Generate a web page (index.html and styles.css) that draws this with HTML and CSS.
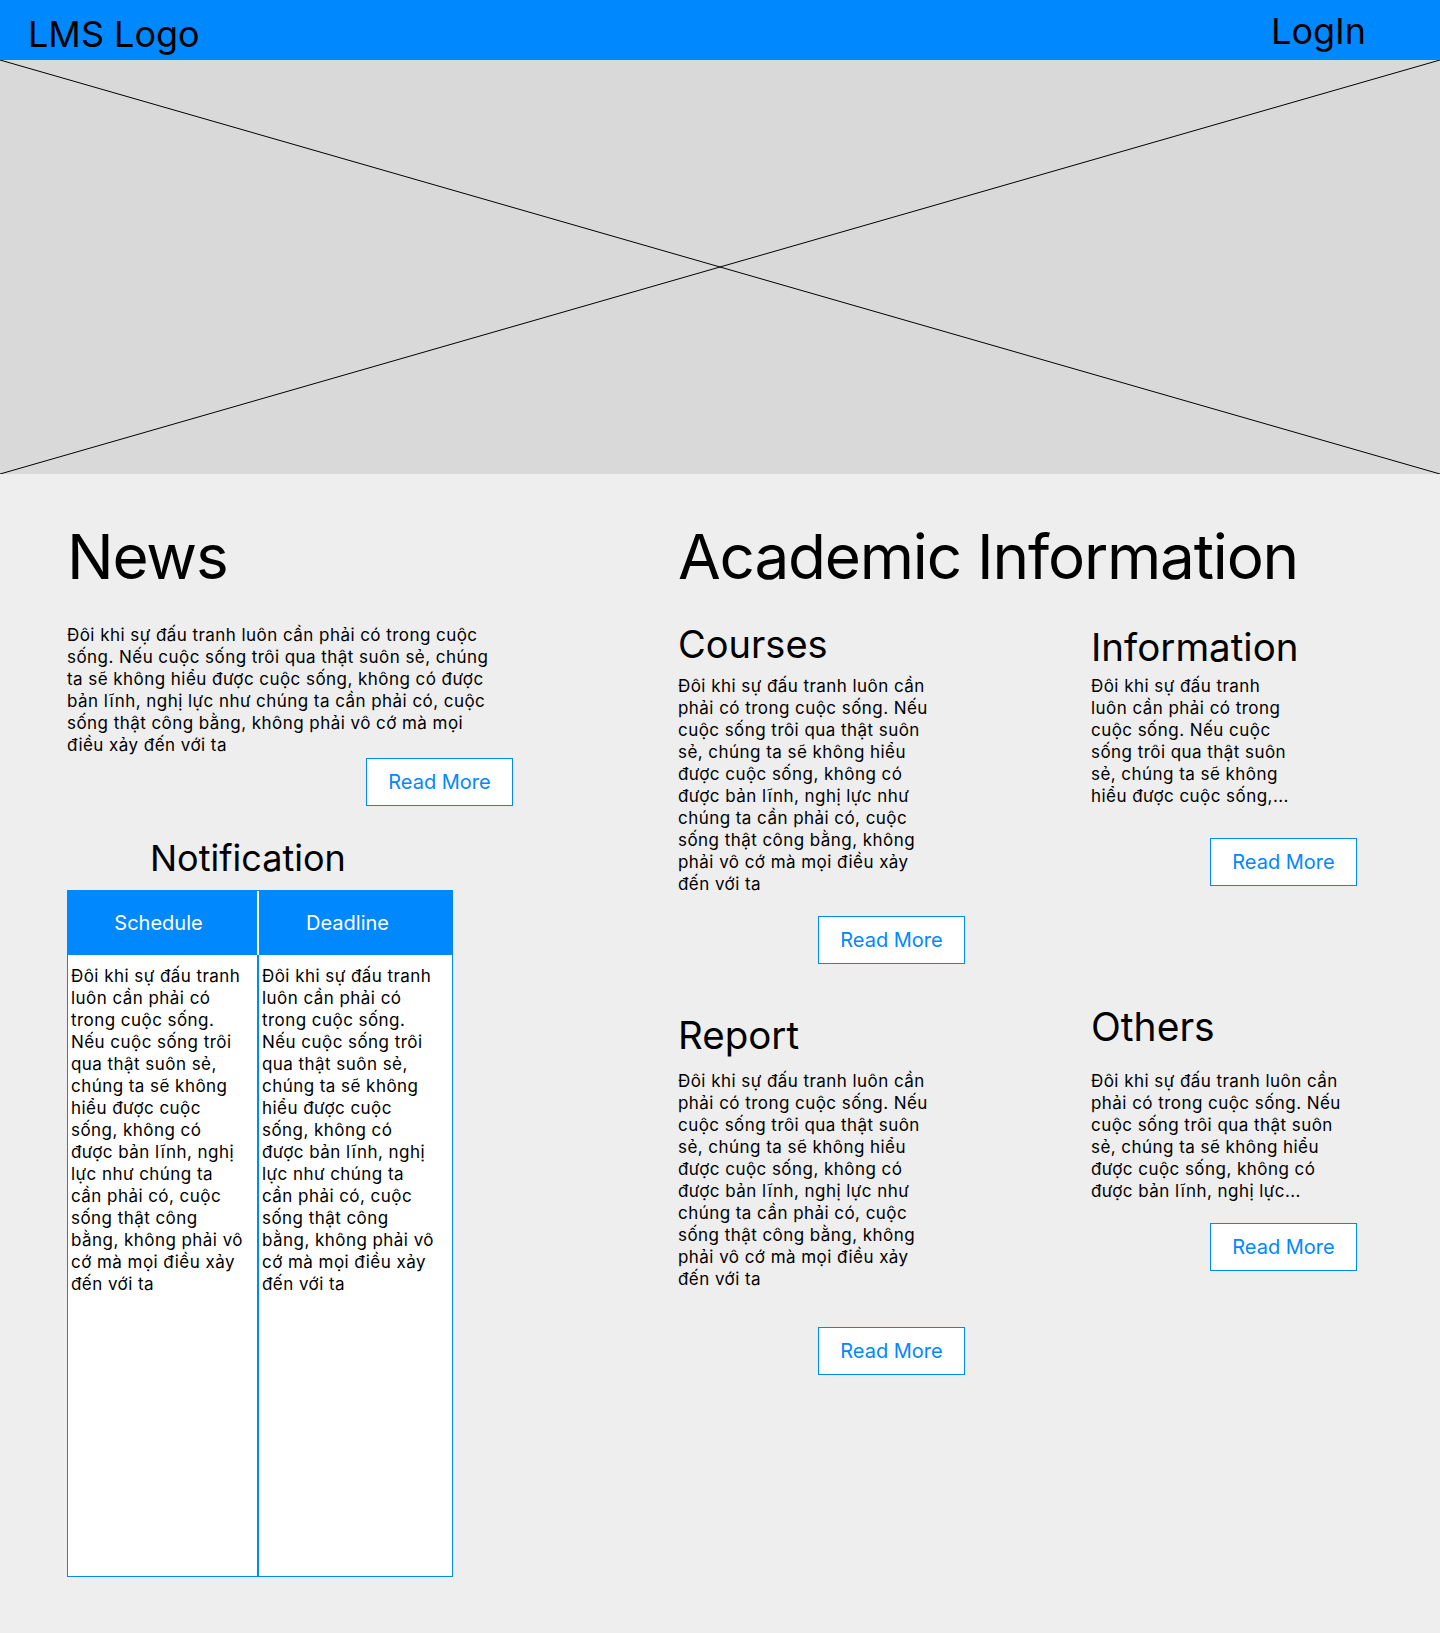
FILE: index.html
```html
<!DOCTYPE html>
<html lang="vi">
<head>
  <meta charset="UTF-8">
  <meta name="viewport" content="width=device-width, initial-scale=1.0">
  <title>LMS</title>
  <link rel="stylesheet" href="styles.css">
</head>
<body>
  <header class="topbar">
    <div class="logo">LMS Logo</div>
    <div class="login">LogIn</div>
  </header>

  <div class="hero">
    <svg class="hero-cross" viewBox="0 0 1440 414" preserveAspectRatio="none">
      <line x1="0" y1="0" x2="1440" y2="414" />
      <line x1="0" y1="414" x2="1440" y2="0" />
    </svg>
  </div>

  <main class="content">
    <section class="left-col">
      <div class="news">
        <h1 class="big-title">News</h1>
        <p class="text news-text">Đôi khi sự đấu tranh luôn cần phải có trong cuộc sống. Nếu cuộc sống trôi qua thật suôn sẻ, chúng ta sẽ không hiểu được cuộc sống, không có được bản lĩnh, nghị lực như chúng ta cần phải có, cuộc sống thật công bằng, không phải vô cớ mà mọi điều xảy đến với ta</p>
        <button class="read-more">Read More</button>
      </div>

      <h2 class="sub-title notify-title">Notification</h2>
      <div class="notice">
        <div class="notice-head">Schedule</div>
        <div class="notice-head second">Deadline</div>
        <div class="notice-body first">Đôi khi sự đấu tranh luôn cần phải có trong cuộc sống. Nếu cuộc sống trôi qua thật suôn sẻ, chúng ta sẽ không hiểu được cuộc sống, không có được bản lĩnh, nghị lực như chúng ta cần phải có, cuộc sống thật công bằng, không phải vô cớ mà mọi điều xảy đến với ta</div>
        <div class="notice-body second">Đôi khi sự đấu tranh luôn cần phải có trong cuộc sống. Nếu cuộc sống trôi qua thật suôn sẻ, chúng ta sẽ không hiểu được cuộc sống, không có được bản lĩnh, nghị lực như chúng ta cần phải có, cuộc sống thật công bằng, không phải vô cớ mà mọi điều xảy đến với ta</div>
      </div>
    </section>

    <section class="right-col">
      <h1 class="big-title">Academic Information</h1>
      <div class="cards">
        <div class="card courses">
          <h2 class="sub-title">Courses</h2>
          <p class="text">Đôi khi sự đấu tranh luôn cần phải có trong cuộc sống. Nếu cuộc sống trôi qua thật suôn sẻ, chúng ta sẽ không hiểu được cuộc sống, không có được bản lĩnh, nghị lực như chúng ta cần phải có, cuộc sống thật công bằng, không phải vô cớ mà mọi điều xảy đến với ta</p>
          <button class="read-more">Read More</button>
        </div>
        <div class="card info">
          <h2 class="sub-title">Information</h2>
          <p class="text">Đôi khi sự đấu tranh luôn cần phải có trong cuộc sống. Nếu cuộc sống trôi qua thật suôn sẻ, chúng ta sẽ không hiểu được cuộc sống,...</p>
          <button class="read-more">Read More</button>
        </div>
        <div class="card report">
          <h2 class="sub-title">Report</h2>
          <p class="text">Đôi khi sự đấu tranh luôn cần phải có trong cuộc sống. Nếu cuộc sống trôi qua thật suôn sẻ, chúng ta sẽ không hiểu được cuộc sống, không có được bản lĩnh, nghị lực như chúng ta cần phải có, cuộc sống thật công bằng, không phải vô cớ mà mọi điều xảy đến với ta</p>
          <button class="read-more">Read More</button>
        </div>
        <div class="card others">
          <h2 class="sub-title">Others</h2>
          <p class="text">Đôi khi sự đấu tranh luôn cần phải có trong cuộc sống. Nếu cuộc sống trôi qua thật suôn sẻ, chúng ta sẽ không hiểu được cuộc sống, không có được bản lĩnh, nghị lực...</p>
          <button class="read-more">Read More</button>
        </div>
      </div>
    </section>
  </main>
</body>
</html>
```

FILE: styles.css
```css
:root {
  --blue: #0088ff;
  --hero: #d9d9d9;
  --bg: #eeeeee;
  --text: #000;
}
* {
  box-sizing: border-box;
}
body {
  margin: 0;
  background: var(--bg);
  color: var(--text);
  font-family: Inter, 'Noto Sans', sans-serif;
  min-height: 1633px;
}
h1, h2, p {
  margin: 0;
  font-weight: 400;
}

.topbar {
  height: 60px;
  background: var(--blue);
  display: flex;
  justify-content: space-between;
  align-items: center;
  padding: 0 74px 0 28px;
  font-size: 36px;
}
.logo {
  padding-top: 7px;
}
.login {
  padding-top: 2px;
}

.hero {
  height: 414px;
  background: var(--hero);
}
.hero-cross {
  display: block;
  width: 100%;
  height: 100%;
}
.hero-cross line {
  stroke: #000;
  stroke-width: 1;
}

.content {
  display: grid;
  grid-template-columns: 611px 1fr;
  padding: 46px 0 0 67px;
}

.big-title {
  font-size: 62px;
  line-height: 1.2;
  letter-spacing: -1.2px;
}
.sub-title {
  font-size: 38px;
  line-height: 46px;
}
.text {
  font-size: 17px;
  line-height: 22px;
  letter-spacing: 0.45px;
}

.read-more {
  width: 147px;
  height: 48px;
  background: #fff;
  border: 1px solid var(--blue);
  color: var(--blue);
  font-family: inherit;
  font-size: 20px;
  cursor: pointer;
}

.news {
  width: 446px;
  display: flex;
  flex-direction: column;
}
.news-text {
  width: 425px;
  margin-top: 30px;
}
.news .read-more {
  align-self: flex-end;
  margin-top: 2px;
}

.notify-title {
  margin: 30px 0 0 83px;
  font-size: 36px;
  line-height: 44px;
}
.notice {
  margin-top: 10px;
  width: 386px;
  height: 687px;
  display: grid;
  grid-template-columns: 189px 193px;
  grid-template-rows: 64px 1fr;
  column-gap: 2px;
  border: 1px solid var(--blue);
  background: #fff;
}
.notice-head {
  background: var(--blue);
  color: #fff;
  font-size: 20px;
  display: flex;
  align-items: center;
  justify-content: center;
  padding-right: 8px;
}
.notice-head.second {
  padding-right: 16px;
}
.notice-body {
  font-size: 17px;
  line-height: 22px;
  letter-spacing: 0.45px;
  padding: 10px 10px 0 3px;
}
.notice-body.first {
  border-right: 2px solid var(--blue);
  margin-right: -2px;
}
.notice-body.second {
  padding-right: 14px;
}

.cards {
  display: grid;
  grid-template-columns: 287px 266px;
  column-gap: 126px;
  row-gap: 40px;
  margin-top: 27px;
}
.card {
  display: flex;
  flex-direction: column;
}
.card .read-more {
  align-self: flex-end;
}
.courses .text {
  width: 250px;
  margin-top: 8px;
}
.courses .read-more {
  margin-top: 21px;
}
.info .sub-title {
  margin-top: 3px;
  font-size: 38.5px;
}
.info .text {
  width: 200px;
  margin-top: 5px;
}
.info .read-more {
  margin-top: 31px;
}
.report .sub-title {
  margin-top: 8px;
  font-size: 38.5px;
}
.report .text {
  width: 250px;
  margin-top: 12px;
}
.report .read-more {
  margin-top: 37px;
}
.others .sub-title {
  font-size: 39px;
}
.others .text {
  width: 250px;
  margin-top: 20px;
}
.others .read-more {
  margin-top: 21px;
}
```
